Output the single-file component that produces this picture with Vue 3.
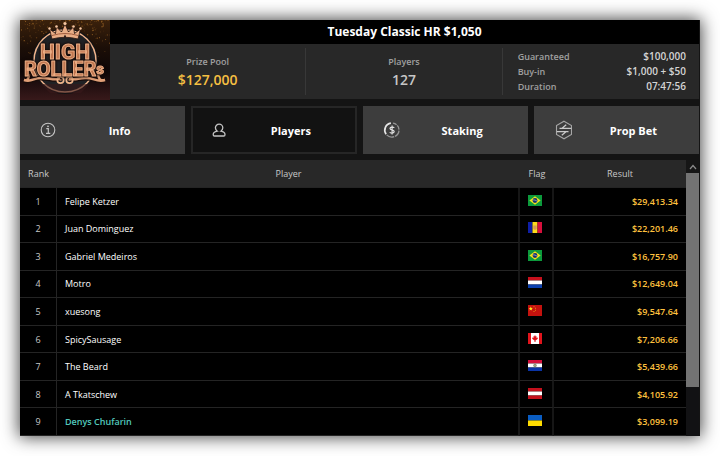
<script setup>
import { ref } from 'vue'

const tabs = [
  { id: 'info', label: 'Info' },
  { id: 'players', label: 'Players' },
  { id: 'staking', label: 'Staking' },
  { id: 'prop', label: 'Prop Bet' },
]
const active = ref('players')

const details = [
  { label: 'Guaranteed', value: '$100,000' },
  { label: 'Buy-in', value: '$1,000 + $50' },
  { label: 'Duration', value: '07:47:56' },
]

const players = [
  { name: 'Felipe Ketzer', flag: 'br', result: '$29,413.34' },
  { name: 'Juan Dominguez', flag: 'ad', result: '$22,201.46' },
  { name: 'Gabriel Medeiros', flag: 'br', result: '$16,757.90' },
  { name: 'Motro', flag: 'nl', result: '$12,649.04' },
  { name: 'xuesong', flag: 'cn', result: '$9,547.64' },
  { name: 'SpicySausage', flag: 'ca', result: '$7,206.66' },
  { name: 'The Beard', flag: 'py', result: '$5,439.66' },
  { name: 'A Tkatschew', flag: 'at', result: '$4,105.92' },
  { name: 'Denys Chufarin', flag: 'ua', result: '$3,099.19', friend: true },
]

/* Three-stripe flags, listed top to bottom */
const stripes = {
  nl: ['#c8101c', '#ffffff', '#0b3fae'],
  py: ['#d5103c', '#ffffff', '#0a34a6'],
  at: ['#c4101c', '#ffffff', '#c4101c'],
}

/* Gold dust behind the logo, from a small fixed-seed generator */
const sparks = []
let seed = 11
const rand = () => (seed = (seed * 16807) % 2147483647) / 2147483647
for (let i = 0; i < 230; i++) {
  const x = rand() * 90
  const y = rand() * rand() * 52
  sparks.push({ x, y, r: 0.25 + rand() * 0.5, o: 0.15 + rand() * 0.5 })
}
</script>

<template>
  <main class="page">
    <section class="lobby">
      <header class="head">
        <svg class="logo" viewBox="0 0 90 80" role="img" aria-label="High Rollers">
          <defs>
            <linearGradient id="night" x1="0" y1="0" x2="0" y2="1">
              <stop offset="0" stop-color="#3b210b" />
              <stop offset="0.35" stop-color="#1b0e07" />
              <stop offset="0.65" stop-color="#0d0607" />
              <stop offset="1" stop-color="#38191a" />
            </linearGradient>
          </defs>
          <rect width="90" height="80" fill="url(#night)" />
          <circle v-for="(s, i) in sparks" :key="i" :cx="s.x" :cy="s.y" :r="s.r" fill="#d08a35" :opacity="s.o" />
          <circle cx="45" cy="41" r="33" fill="#111214" />
          <circle cx="45" cy="41" r="31" fill="#202124" stroke="#f0b48c" stroke-width="1.5" />
          <path d="M21 64h48l-8 9H30z" fill="#38191a" opacity=".6" />
          <path d="M32 19 29.500 9l6 4.500L36.500 7l5 5L45 4l3.500 8 5-5 1 6.500 6-4.500L58 19q-13-3.500-26 0z" fill="#e9ad86" stroke="#2a1510" stroke-width=".8" />
          <path d="M32 15.500q13-4 26 0" fill="none" stroke="#a35e40" stroke-width="1" />
          <circle cx="45" cy="3.500" r="1.600" fill="#f6c6a0" />
          <circle cx="36.500" cy="6.500" r="1.300" fill="#f6c6a0" />
          <circle cx="53.500" cy="6.500" r="1.300" fill="#f6c6a0" />
          <circle cx="29.500" cy="8.500" r="1.200" fill="#f6c6a0" />
          <circle cx="60.500" cy="8.500" r="1.200" fill="#f6c6a0" />
          <path d="M44 16.500l1-2 1 2-1 2z" fill="#201010" />
          <g fill="none" stroke-linecap="round">
            <path d="M9 55c-1 4-1 6-5 5 8 3 10-3 18-2 8 0 10 2 17 1M78 55c1 4 2 6 7 5-8 3-12-3-20-2-7 0-8 2-15 1" stroke="#1a0c0a" stroke-width="5" />
            <path d="M9 55c-1 4-1 6-5 5 8 3 10-3 18-2 8 0 10 2 17 1M78 55c1 4 2 6 7 5-8 3-12-3-20-2-7 0-8 2-15 1" stroke="#e2a078" stroke-width="2.500" />
            <circle cx="40.500" cy="60" r="3.200" stroke="#eeb48a" stroke-width="1.700" />
            <circle cx="49.500" cy="60" r="3.200" stroke="#eeb48a" stroke-width="1.700" />
            <path d="M40 60h1M49 60h1" stroke="#c98560" stroke-width="1.500" />
          </g>
          <text class="logo-text" fill="#c07650" stroke="#eaac84" stroke-width="1">
            <tspan x="20" y="39" font-size="21">HIGH</tspan>
            <tspan x="4" y="56" font-size="20">ROLLER</tspan><tspan font-size="15" dy="-2">s</tspan>
          </text>
        </svg>

        <div class="summary">
          <h1 class="title">Tuesday Classic HR $1,050</h1>
          <div class="facts">
            <div class="fact">
              <span class="fact-label">Prize Pool</span>
              <strong class="fact-value gold">$127,000</strong>
            </div>
            <div class="fact">
              <span class="fact-label">Players</span>
              <strong class="fact-value">127</strong>
            </div>
            <dl class="details">
              <div v-for="d in details" :key="d.label" class="detail">
                <dt>{{ d.label }}</dt>
                <dd>{{ d.value }}</dd>
              </div>
            </dl>
          </div>
        </div>
      </header>

      <nav class="tabs">
        <button
          v-for="t in tabs"
          :key="t.id"
          type="button"
          class="tab"
          :class="{ active: active === t.id }"
          :aria-pressed="active === t.id"
          @click="active = t.id"
        >
          <svg class="tab-icon" viewBox="0 0 20 20" fill="none" stroke="#c4c4c4" stroke-width="1.100" aria-hidden="true">
            <template v-if="t.id === 'info'">
              <circle cx="10" cy="10" r="6.800" />
              <path d="M8.300 8.600h2v4.600M8 13.300h4.300" stroke-width="1.200" />
              <circle cx="10" cy="6.300" r=".9" fill="#c4c4c4" stroke="none" />
            </template>
            <template v-else-if="t.id === 'players'">
              <path d="M8.300 11.200C6.900 10.200 6.400 9 6.400 7.800a3.700 3.700 0 0 1 7.400 0c0 1.200-.5 2.400-1.900 3.400 2.500.4 4.100 1.700 4.100 3.500 0 .8-.5 1.300-1.300 1.300H5.500c-.8 0-1.300-.5-1.300-1.300 0-1.800 1.600-3.100 4.100-3.500z" stroke-width="1.300" />
            </template>
            <template v-else-if="t.id === 'staking'">
              <path d="M5.100 14.200A7 7 0 0 1 9.900 3.200" stroke="#e6e6e6" stroke-width="1.700" />
              <path d="M12 3.100a7 7 0 0 1 3.600 1.600M16.300 5.400a7 7 0 0 1 1.700 4.200M18 10.600a7 7 0 0 1-4 5.700M13.200 16.600a7 7 0 0 1-7.500-1.700" stroke="#969696" stroke-width="1.300" />
              <path d="M13.200 7.900C12.800 6.900 9 6.600 9 8.500c0 1.800 4.200 1.100 4.200 3.100 0 1.900-3.900 1.800-4.400.5M11.100 5.600v8.800" stroke="#e0e0e0" stroke-width="1.200" />
            </template>
            <template v-else>
              <path d="M12 1.200l7.500 4.300v9L12 18.800l-7.500-4.300v-9z" stroke="#a6a6a6" stroke-width="1.100" />
              <path d="M19.300 8.300H10l4.200-3.600M4.700 11.700H14l-4.200 3.600M10 8.300l-2.500 0M14 11.700h2.500" stroke="#cacaca" stroke-width="1.300" />
            </template>
          </svg>
          <span class="tab-label">{{ t.label }}</span>
        </button>
      </nav>

      <div class="list">
        <table class="standings">
          <colgroup>
            <col class="col-rank" />
            <col />
            <col class="col-flag" />
            <col class="col-result" />
          </colgroup>
          <thead>
            <tr>
              <th scope="col">Rank</th>
              <th scope="col">Player</th>
              <th scope="col">Flag</th>
              <th scope="col">Result</th>
            </tr>
          </thead>
          <tbody>
            <tr v-for="(p, i) in players" :key="p.name">
              <td class="rank">{{ i + 1 }}</td>
              <td class="name" :class="{ friend: p.friend }">{{ p.name }}</td>
              <td class="flag-cell">
                <svg class="flag" viewBox="0 0 14 11" role="img" :aria-label="p.flag">
                  <template v-if="p.flag === 'br'">
                    <path d="M0 0h14v11H0z" fill="#0c9a3c" />
                    <path d="M7 1.200 12.600 5.500 7 9.800 1.400 5.500z" fill="#f4e01c" />
                    <circle cx="7" cy="5.500" r="2.400" fill="#15306f" />
                    <path d="M5 4.900q2-.3 4 1.200" fill="none" stroke="#c9d6e6" stroke-width=".6" />
                  </template>
                  <template v-else-if="p.flag === 'ad'">
                    <path d="M0 0h4.500v11H0z" fill="#0f1fa6" />
                    <path d="M4.500 0h5v11h-5z" fill="#fbdc1c" />
                    <path d="M9.500 0H14v11H9.500z" fill="#d80f3c" />
                    <path d="M5.300 3.500h3.400v3.300L7 8 5.300 6.800z" fill="#d99a52" />
                  </template>
                  <template v-else-if="p.flag === 'cn'">
                    <path d="M0 0h14v11H0z" fill="#c4120e" />
                    <path d="M2.800 1.600l.6 1.400 1.500.1-1.200 1 .4 1.500-1.300-.8-1.300.8.4-1.500-1.200-1L2.200 3z" fill="#ffe81c" />
                    <path d="M5.500 1.300h1v1h-1zM7 2.700h1v1H7zM7 4.700h1v1H7zM5.500 6h1v1h-1z" fill="#e58a18" />
                  </template>
                  <template v-else-if="p.flag === 'ca'">
                    <path d="M0 0h14v11H0z" fill="#fff" />
                    <path d="M0 0h3v11H0zM11 0h3v11h-3z" fill="#e0141c" />
                    <path d="M7 2l.8 1.500.8-.3-.1 1.700 1.500-.4-.4 1.400L7.500 7.500V9h-1V7.500L4.400 5.900 4 4.500l1.500.4-.1-1.700.8.3z" fill="#e0141c" />
                  </template>
                  <template v-else-if="p.flag === 'ua'">
                    <path d="M0 0h14v5.500H0z" fill="#0a5dc2" />
                    <path d="M0 5.500h14V11H0z" fill="#ffdc00" />
                  </template>
                  <template v-else>
                    <path d="M0 0h14v3.500H0z" :fill="stripes[p.flag][0]" />
                    <path d="M0 3.500h14v4H0z" :fill="stripes[p.flag][1]" />
                    <path d="M0 7.500h14V11H0z" :fill="stripes[p.flag][2]" />
                    <circle v-if="p.flag === 'py'" cx="7" cy="5.500" r="1.400" fill="#b5a384" stroke="#6d8a6c" stroke-width=".7" />
                  </template>
                </svg>
              </td>
              <td class="result">{{ p.result }}</td>
            </tr>
          </tbody>
        </table>
        <div class="scrollbar">
          <button type="button" class="scroll-up" aria-label="Scroll up">
            <svg viewBox="0 0 8 6" aria-hidden="true"><path d="M1 5l3-3.500L7 5" fill="none" stroke="#8a8a8a" stroke-width="1.200" /></svg>
          </button>
          <div class="thumb"></div>
          <div class="track"></div>
        </div>
      </div>
    </section>
  </main>
</template>

<style>
body {
  background: #fff;
}
</style>

<style scoped>
.page {
  padding: 20px;
  font-family: "Open Sans", "Noto Sans", sans-serif;
  font-size: 9px;
}
.lobby {
  background: #141414;
  border-right: 1px solid #141414;
  box-shadow: 0 0 16px 1px rgba(0, 0, 0, 0.75);
}
.head {
  display: flex;
  align-items: flex-start;
}
.logo {
  flex: none;
  width: 90px;
  height: 80px;
}
.logo-text {
  font-family: Roboto, sans-serif;
  font-weight: 700;
  stroke-linejoin: round;
  filter: drop-shadow(0 0 1px #140806) drop-shadow(0 0 1px #140806);
}
.summary {
  flex: 1;
  background: #282828;
}
.title {
  margin: 0;
  background: #000;
  color: #fff;
  font-size: 12px;
  font-weight: 700;
  line-height: 24px;
  text-align: center;
}
.facts {
  display: grid;
  grid-template-columns: 1fr 1fr 1fr;
  padding: 4px 0;
}
.fact {
  display: flex;
  flex-direction: column;
  align-items: center;
  padding-top: 6px;
  border-right: 1px solid #383838;
}
.fact-label {
  color: #a0a0a0;
  font-weight: 600;
  line-height: 16px;
}
.fact-value {
  color: #c6c6c6;
  font-size: 14px;
  font-weight: 600;
  line-height: 20px;
}
.fact-value.gold {
  color: #f5bf42;
}
.details {
  margin: 0;
  padding: 1px 13px 1px 15px;
}
.detail {
  display: flex;
  justify-content: space-between;
  font-weight: 600;
  line-height: 15px;
}
.detail dt {
  color: #a0a0a0;
}
.detail dd {
  margin: 0;
  color: #d4d4d4;
  font-size: 10px;
}
.tabs {
  display: grid;
  grid-template-columns: repeat(4, 1fr);
  gap: 6px;
  padding: 6px 0;
}
.tab {
  display: flex;
  align-items: center;
  height: 48px;
  padding: 0 20px 0 16px;
  border: 2px solid #3d3d3d;
  background: #3d3d3d;
  color: #fff;
  font-family: inherit;
  font-size: 11px;
  font-weight: 700;
}
.tab.active {
  border-color: #262626;
  background: #121212;
}
.tab-icon {
  flex: none;
  width: 20px;
  height: 20px;
}
.tab-label {
  flex: 1;
  padding-left: 18px;
  text-align: center;
}
.list {
  display: flex;
}
.standings {
  flex: 1;
  height: 276px;
  border-collapse: separate;
  border-spacing: 0;
  table-layout: fixed;
  background: #000;
}
.standings thead tr {
  height: 28px;
}
.col-rank {
  width: 37px;
}
.col-flag {
  width: 34px;
}
.col-result {
  width: 132px;
}
.standings th,
.standings td {
  padding: 0;
  border-bottom: 1px solid #242424;
}
.standings th {
  background: #282828;
  color: #c8c8c8;
  font-weight: 400;
  text-align: center;
}
.standings td {
  border-right: 2px solid #161616;
  color: #fff;
}
.standings .rank {
  border-right: 1px solid #242424;
  color: #c8c8c8;
  text-align: center;
}
.standings .name {
  padding-left: 8px;
}
.standings .friend {
  color: #52c8bd;
  font-weight: 600;
}
.standings .flag-cell {
  padding: 0 2px 4px 0;
  text-align: center;
}
.flag {
  display: inline-block;
  width: 14px;
  height: 11px;
  vertical-align: middle;
}
.standings .result {
  padding-right: 8px;
  border-right: 0;
  color: #ffc03e;
  font-weight: 600;
  text-align: right;
}
.scrollbar {
  display: flex;
  flex: none;
  flex-direction: column;
  width: 13px;
  background: #121214;
}
.scroll-up {
  display: flex;
  align-items: center;
  justify-content: center;
  height: 13px;
  padding: 0;
  border: 0;
  background: #161616;
}
.scroll-up svg {
  width: 8px;
  height: 6px;
}
.thumb {
  flex: 214;
  background: #737373;
}
.track {
  flex: 49;
}
</style>
